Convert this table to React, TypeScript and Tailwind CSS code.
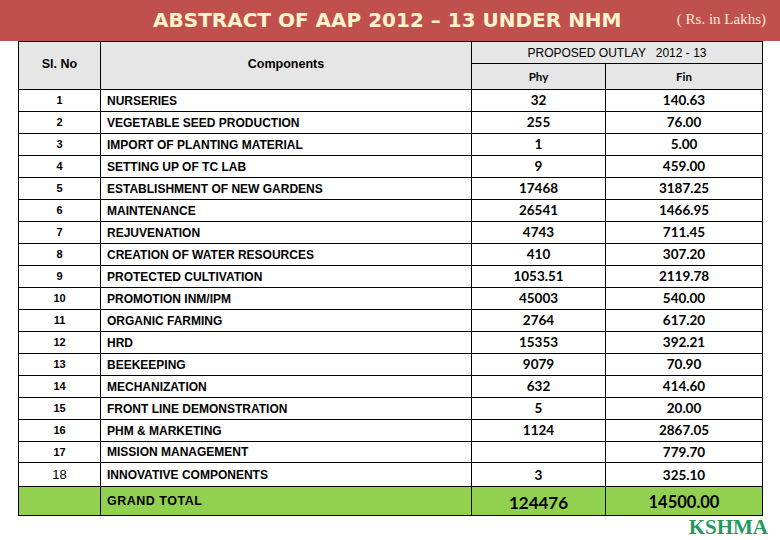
const rows: [string, string, string, string][] = [
  ['1', 'NURSERIES', '32', '140.63'],
  ['2', 'VEGETABLE SEED PRODUCTION', '255', '76.00'],
  ['3', 'IMPORT OF PLANTING MATERIAL', '1', '5.00'],
  ['4', 'SETTING UP OF TC LAB', '9', '459.00'],
  ['5', 'ESTABLISHMENT OF NEW GARDENS', '17468', '3187.25'],
  ['6', 'MAINTENANCE', '26541', '1466.95'],
  ['7', 'REJUVENATION', '4743', '711.45'],
  ['8', 'CREATION OF WATER RESOURCES', '410', '307.20'],
  ['9', 'PROTECTED CULTIVATION', '1053.51', '2119.78'],
  ['10', 'PROMOTION INM/IPM', '45003', '540.00'],
  ['11', 'ORGANIC FARMING', '2764', '617.20'],
  ['12', 'HRD', '15353', '392.21'],
  ['13', 'BEEKEEPING', '9079', '70.90'],
  ['14', 'MECHANIZATION', '632', '414.60'],
  ['15', 'FRONT LINE DEMONSTRATION', '5', '20.00'],
  ['16', 'PHM & MARKETING', '1124', '2867.05'],
  ['17', 'MISSION MANAGEMENT', '', '779.70'],
];

const arial = "font-['Liberation_Sans',Arial,sans-serif]";
const num = "font-['Lato','Open_Sans',sans-serif]";

export default function App() {
  return (
    <div className="w-[780px] h-[540px] bg-white overflow-hidden text-black">
      {/* title bar */}
      <div className="h-[41px] bg-[#c0504d] relative">
        <h1 className="absolute left-[153px] top-[8px] font-['DejaVu_Sans',Verdana,sans-serif] font-bold text-[20px] leading-[24px] text-[#fff2cc] whitespace-nowrap">
          ABSTRACT OF AAP 2012 – 13 UNDER NHM
        </h1>
        <span className="absolute right-[14px] top-[10px] font-['Liberation_Serif',serif] text-[15px] leading-[18px] text-[#fde9d9]">
          ( Rs. in Lakhs)
        </span>
      </div>

      <table className="ml-[18px] w-[744px] border-collapse table-fixed">
        <colgroup>
          <col className="w-[82px]" />
          <col className="w-[371px]" />
          <col className="w-[134px]" />
          <col className="w-[157px]" />
        </colgroup>
        <thead>
          <tr className="h-[22px] bg-[#e6e6e6]">
            <th rowSpan={2} className={`border border-black ${arial} font-bold text-[12.5px] pb-[2px]`}>
              Sl. No
            </th>
            <th rowSpan={2} className={`border border-black ${arial} font-bold text-[12.5px] pb-[2px]`}>
              Components
            </th>
            <th colSpan={2} className={`border border-black ${arial} font-normal text-[12px] whitespace-pre`}>
              PROPOSED OUTLAY   2012 - 13
            </th>
          </tr>
          <tr className="h-[26px] bg-[#e6e6e6]">
            <th className={`border border-black ${num} font-bold text-[11.5px]`}>Phy</th>
            <th className={`border border-black ${num} font-bold text-[11.5px]`}>Fin</th>
          </tr>
        </thead>
        <tbody>
          {rows.map(([sl, comp, phy, fin], i) => (
            <tr key={sl} className={i === 16 ? 'h-[21px]' : 'h-[22px]'}>
              <td className={`border border-black text-center ${arial} font-bold text-[11px] p-0`}>{sl}</td>
              <td className={`border border-black pl-[6px] ${arial} font-bold text-[12px] p-0`}>{comp}</td>
              <td className={`border border-black text-center ${num} font-bold text-[13.5px] p-0`}>{phy}</td>
              <td className={`border border-black text-center ${num} font-bold text-[13.5px] p-0`}>{fin}</td>
            </tr>
          ))}
          <tr className="h-[24px]">
            <td className={`border border-black text-center ${arial} text-[13px] p-0`}>18</td>
            <td className={`border border-black pl-[6px] ${arial} font-bold text-[12px] p-0`}>INNOVATIVE COMPONENTS</td>
            <td className={`border border-black text-center ${num} font-bold text-[13.5px] p-0`}>3</td>
            <td className={`border border-black text-center ${num} font-bold text-[13.5px] p-0`}>325.10</td>
          </tr>
          <tr className="h-[29px] bg-[#92d050]">
            <td className="border border-black p-0"></td>
            <td className={`border border-black pl-[6px] ${arial} font-bold text-[12.5px] tracking-[0.5px] p-0`}>GRAND TOTAL</td>
            <td className={`border border-black text-center ${num} font-bold text-[17px] p-0 pt-[2px]`}>124476</td>
            <td className={`border border-black text-center ${num} font-bold text-[16.5px] p-0 pt-[2px]`}>14500.00</td>
          </tr>
        </tbody>
      </table>

      <div className="flex justify-end pr-[12px]">
        <span className="font-['Liberation_Serif',serif] font-bold text-[21px] leading-[22px] text-[#1f9a5c]">
          KSHMA
        </span>
      </div>
    </div>
  );
}
